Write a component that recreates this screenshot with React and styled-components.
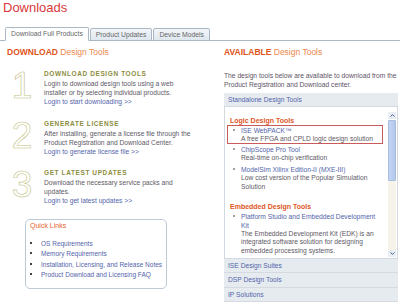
import React from 'react';
import { styled, createGlobalStyle } from 'styled-components';

const GlobalStyle = createGlobalStyle`
  body {
    margin: 0;
    background: #fff;
    font-family: "Liberation Sans", Arial, sans-serif;
  }
`;

const steps = [
  {
    num: '1',
    title: 'DOWNLOAD DESIGN TOOLS',
    text: 'Login to download design tools using a web installer or by selecting individual products.',
    link: 'Login to start downloading >>'
  },
  {
    num: '2',
    title: 'GENERATE LICENSE',
    text: 'After installing, generate a license file through the Product Registration and Download Center.',
    link: 'Login to generate license file >>'
  },
  {
    num: '3',
    title: 'GET LATEST UPDATES',
    text: 'Download the necessary service packs and updates.',
    link: 'Login to get latest updates >>'
  }
];

const quickLinks = [
  'OS Requirements',
  'Memory Requirements',
  'Installation, Licensing, and Release Notes',
  'Product Download and Licensing FAQ'
];

const groups = [
  {
    name: 'Logic Design Tools',
    items: [
      { title: 'ISE WebPACK™', desc: 'A free FPGA and CPLD logic design solution', selected: true },
      { title: 'ChipScope Pro Tool', desc: 'Real-time on-chip verification' },
      { title: 'ModelSim Xilinx Edition-II (MXE-III)', desc: 'Low cost version of the Popular Simulation Solution' }
    ]
  },
  {
    name: 'Embedded Design Tools',
    items: [
      {
        title: 'Platform Studio and Embedded Development Kit',
        desc: 'The Embedded Development Kit (EDK) is an integrated software solution for designing embedded processing systems.'
      }
    ]
  }
];

const sections = ['ISE Design Suites', 'DSP Design Tools', 'IP Solutions'];

export default function App() {
  return (
    <Page>
      <GlobalStyle />
      <Title>Downloads</Title>
      <Tabs>
        <Tab $active>Download Full Products</Tab>
        <Tab>Product Updates</Tab>
        <Tab>Device Models</Tab>
      </Tabs>

      <Columns>
        <LeftCol>
          <SectionHeading>
            <b>DOWNLOAD</b> Design Tools
          </SectionHeading>
          <Steps>
            {steps.map((s) => (
              <Step key={s.num}>
                <BigNum>{s.num}</BigNum>
                <div>
                  <StepTitle>{s.title}</StepTitle>
                  <BodyText>{s.text}</BodyText>
                  <Link>{s.link}</Link>
                </div>
              </Step>
            ))}
          </Steps>

          <QuickBox>
            <QuickTitle>Quick Links</QuickTitle>
            <QuickList>
              {quickLinks.map((q) => (
                <QuickItem key={q}>
                  <Dot $dark />
                  <span>{q}</span>
                </QuickItem>
              ))}
            </QuickList>
          </QuickBox>
        </LeftCol>

        <RightCol>
          <SectionHeading>
            <b>AVAILABLE</b> Design Tools
          </SectionHeading>
          <Desc>
            The design tools below are available to download from the Product Registration and Download center.
          </Desc>
          <Panel>
            <Band $top>Standalone Design Tools</Band>
            <ListBox>
              <ListContent>
                {groups.map((g) => (
                  <Group key={g.name}>
                    <GroupName>{g.name}</GroupName>
                    {g.items.map((it) => (
                      <Item key={it.title} $selected={it.selected}>
                        <Dot />
                        <ItemText>
                          <Link>{it.title}</Link>
                          <div>{it.desc}</div>
                        </ItemText>
                      </Item>
                    ))}
                  </Group>
                ))}
              </ListContent>
              <ScrollBar>
                <ScrollBtn>
                  <svg width="5" height="3" viewBox="0 0 5 3">
                    <path d="M0.5 2.6 L2.5 0.6 L4.5 2.6" fill="none" stroke="#4a6290" strokeWidth="1" />
                  </svg>
                </ScrollBtn>
                <Thumb />
                <Track />
                <ScrollBtn>
                  <svg width="5" height="3" viewBox="0 0 5 3">
                    <path d="M0.5 0.4 L2.5 2.4 L4.5 0.4" fill="none" stroke="#4a6290" strokeWidth="1" />
                  </svg>
                </ScrollBtn>
              </ScrollBar>
            </ListBox>
            {sections.map((s) => (
              <Band key={s}>{s}</Band>
            ))}
          </Panel>
        </RightCol>
      </Columns>
    </Page>
  );
}

const Page = styled.div`
  width: 400px;
  height: 305px;
  overflow: hidden;
`;

const Title = styled.h1`
  margin: 0;
  padding-left: 3px;
  font-size: 13px;
  line-height: 15px;
  font-weight: normal;
  color: #d9393b;
`;

const Tabs = styled.div`
  margin-top: 12px;
  padding-left: 5px;
  height: 13px;
  display: flex;
  align-items: flex-end;
  border-bottom: 1px solid #aab8c6;
`;

const Tab = styled.div`
  box-sizing: border-box;
  padding: 0 5px;
  margin-bottom: -1px;
  margin-right: 1px;
  font-size: 6.8px;
  line-height: 12px;
  color: #666;
  border: 1px solid #aab8c6;
  border-radius: 2px 2px 0 0;
  background: ${(p) => (p.$active ? '#fff' : 'linear-gradient(#f3f6fa, #dfe7ef)')};
  border-bottom-color: ${(p) => (p.$active ? '#fff' : '#aab8c6')};
  height: ${(p) => (p.$active ? '14px' : '13px')};
`;

const Columns = styled.div`
  display: grid;
  grid-template-columns: 224px 174px;
  padding-top: 6px;
`;

const LeftCol = styled.div`
  padding-left: 7px;
`;

const RightCol = styled.div``;

const SectionHeading = styled.h2`
  margin: 0;
  font-size: 8.5px;
  line-height: 10px;
  font-weight: normal;
  color: #ec874c;
  & b {
    color: #e0541a;
  }
`;

const Steps = styled.div`
  margin-top: 11px;
  display: flex;
  flex-direction: column;
  gap: 11.5px;
`;

const Step = styled.div`
  display: grid;
  grid-template-columns: 22px 1fr;
  column-gap: 11px;
  padding-left: 4px;
`;

const BigNum = styled.div`
  margin-top: -1px;
  font-size: 37px;
  line-height: 37px;
  text-align: center;
  color: transparent;
  -webkit-text-stroke: 0.6px #c4c184;
`;

const StepTitle = styled.div`
  font-size: 6.5px;
  line-height: 11px;
  font-weight: bold;
  letter-spacing: 0.6px;
  color: #8d8d3d;
`;

const BodyText = styled.div`
  font-size: 6.7px;
  line-height: 9px;
  color: #5e5966;
  width: 148px;
`;

const Link = styled.div`
  font-size: 6.7px;
  line-height: 9px;
  color: #5364aa;
`;

const QuickBox = styled.div`
  margin: 14px 0 0 18px;
  width: 142px;
  height: 70px;
  box-sizing: border-box;
  border: 1px solid #bccad8;
  border-radius: 5px;
  padding: 1px 0 0 4px;
`;

const QuickTitle = styled.div`
  font-size: 7px;
  line-height: 9px;
  color: #e6612a;
`;

const QuickList = styled.div`
  margin-top: 8.5px;
`;

const QuickItem = styled.div`
  display: flex;
  align-items: flex-start;
  gap: 9px;
  font-size: 6.5px;
  line-height: 10.5px;
  color: #5364aa;
`;

const Dot = styled.span`
  flex: none;
  width: 2px;
  height: 2px;
  margin-top: 3px;
  background: ${(p) => (p.$dark ? '#444' : '#a0a0a0')};
`;

const Desc = styled.div`
  margin-top: 13.5px;
  font-size: 6.7px;
  line-height: 9px;
  color: #5e5466;
  width: 176px;
`;

const Panel = styled.div`
  margin-top: 4px;
  width: 174px;
`;

const Band = styled.div`
  height: ${(p) => (p.$top ? '13px' : '14.5px')};
  box-sizing: border-box;
  padding-left: 4px;
  font-size: 6.7px;
  line-height: ${(p) => (p.$top ? '13px' : '14px')};
  color: #5364aa;
  background: #e6ebf0;
  border-bottom: ${(p) => (p.$top ? 'none' : '1px solid #d4dae0')};
`;

const ListBox = styled.div`
  height: 153px;
  box-sizing: border-box;
  border: 1px solid #d3d9e0;
  background: #fff;
  display: flex;
`;

const ListContent = styled.div`
  flex: 1;
  overflow: hidden;
  padding: 9px 0 0 5px;
`;

const Group = styled.div`
  margin-bottom: 9px;
`;

const GroupName = styled.div`
  font-size: 7px;
  line-height: 9px;
  font-weight: bold;
  color: #e0561e;
`;

const Item = styled.div`
  display: flex;
  align-items: flex-start;
  gap: 6px;
  margin-left: -3px;
  margin-right: 5px;
  padding-left: 5px;
  border: 1px solid ${(p) => (p.$selected ? '#c95b5b' : 'transparent')};
  font-size: 6.7px;
  line-height: 8.8px;
  color: #5e5966;
`;

const ItemText = styled.div`
  flex: 1;
`;

const ScrollBar = styled.div`
  width: 8px;
  margin: 5px 1px 1px 0;
  display: flex;
  flex-direction: column;
`;

const ScrollBtn = styled.div`
  height: 7px;
  display: flex;
  align-items: center;
  justify-content: center;
  background: #e9eef5;
`;

const Thumb = styled.div`
  height: 61px;
  margin-top: 1px;
  background: linear-gradient(90deg, #c4d5f2, #b3c8ee);
  border: 1px solid #a6bbe0;
  border-radius: 1px;
  box-sizing: border-box;
`;

const Track = styled.div`
  flex: 1;
  background: #f6f3ea;
`;
